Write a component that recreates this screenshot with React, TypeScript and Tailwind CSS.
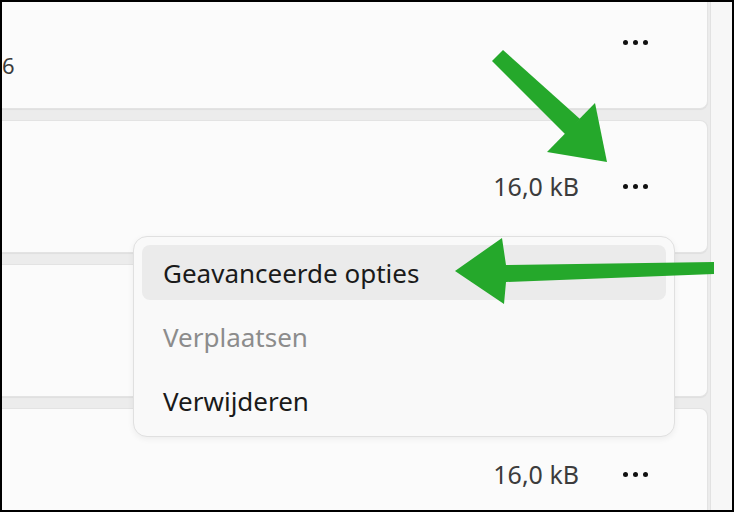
import React from "react";

const Dots = () => (
  <div className="flex items-center gap-[5px] w-[25px]">
    <span className="block w-[5px] h-[5px] rounded-full bg-[#111]" />
    <span className="block w-[5px] h-[5px] rounded-full bg-[#111]" />
    <span className="block w-[5px] h-[5px] rounded-full bg-[#111]" />
  </div>
);

const Card = ({ children }: { children?: React.ReactNode }) => (
  <div className="relative h-[133px] shrink-0 bg-[#fbfbfb] border border-l-0 border-[#e3e3e3] rounded-r-[8px] shadow-[0_1px_1px_rgba(0,0,0,0.06)]">
    {children}
  </div>
);

const SizeRow = () => (
  <div className="mt-[51px] h-[28px] flex items-center justify-end pr-[59px] gap-[44px]">
    <span className="text-[25px] leading-none text-[#3c3c3c]">16,0 kB</span>
    <Dots />
  </div>
);

export default function App() {
  return (
    <div
      className="relative w-[734px] h-[512px] overflow-hidden bg-[#ececec] border-2 border-black"
      style={{ fontFamily: '"Noto Sans", "Open Sans", sans-serif' }}
    >
      <div className="flex h-full">
        <div className="flex-1 flex flex-col gap-[11px] -mt-[26px]">
          <Card>
            <div className="flex justify-between">
              <div className="mt-[76px] text-[22px] leading-[24px] text-[#3c3c3c]">6</div>
              <div className="mt-[51px] h-[28px] flex items-center pr-[59px]">
                <Dots />
              </div>
            </div>
          </Card>
          <Card>
            <SizeRow />
          </Card>
          <Card>
            <SizeRow />
          </Card>
          <Card>
            <SizeRow />
          </Card>
        </div>
        <div className="w-[24px] pl-[2px] flex">
          <div className="flex-1 bg-[#f7f7f7] border-l border-[#e2e2e2]" />
        </div>
      </div>

      <div className="absolute left-[131px] top-[234px] w-[542px] h-[201px] bg-[#f9f9f9] border border-[#e0e0e0] rounded-[14px] shadow-[0_2px_6px_rgba(0,0,0,0.06)] p-[8px] flex flex-col gap-[9px]">
        <div className="h-[55px] rounded-[8px] bg-[#ebebeb] flex items-center pl-[21px] pt-[2px] text-[26px] text-[#1a1a1a]">
          Geavanceerde opties
        </div>
        <div className="h-[55px] rounded-[8px] flex items-center pl-[21px] pt-[2px] text-[26px] text-[#8c8c8c]">
          Verplaatsen
        </div>
        <div className="h-[55px] rounded-[8px] flex items-center pl-[21px] pt-[2px] text-[26px] text-[#1a1a1a]">
          Verwijderen
        </div>
      </div>

      <svg
        className="absolute -left-[2px] -top-[2px] pointer-events-none"
        width="734"
        height="512"
        viewBox="0 0 734 512"
      >
        <polygon points="503,50 580,119 566,135 492,61" fill="#25a82b" />
        <polygon points="595,103 607,162 547,152" fill="#25a82b" />
        <polygon points="455,271 502,238 506,265 714,262 714,274 506,282 504,304" fill="#25a82b" />
      </svg>
    </div>
  );
}
